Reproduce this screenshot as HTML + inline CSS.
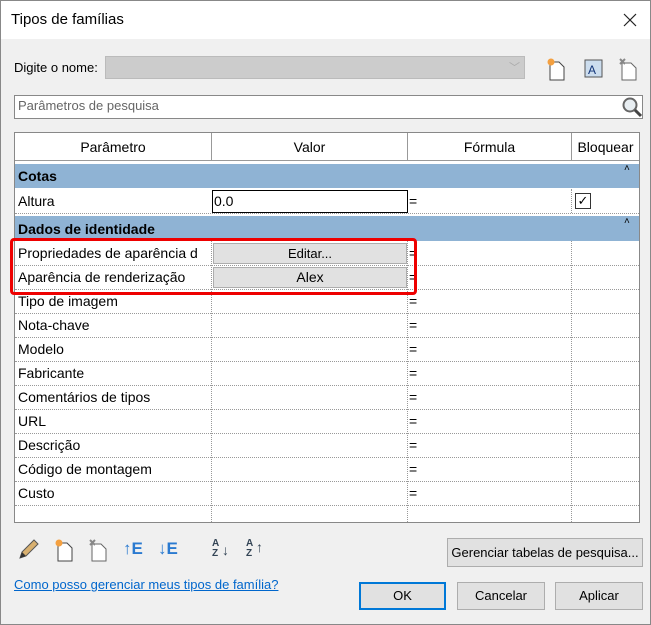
<!DOCTYPE html>
<html><head><meta charset="utf-8"><style>
*{box-sizing:border-box;margin:0;padding:0}
body{width:651px;height:625px;background:#f0f0f0;font-family:"Liberation Sans",sans-serif;font-size:14px;color:#000;position:relative;overflow:hidden;border:1px solid #888}
.a{position:absolute}
.title{left:0;top:0;width:649px;height:38px;background:#fff}
.hl{border-top:1px dotted #999}
.vl{border-left:1px dotted #999}
.cell{position:absolute;height:24px;line-height:24px;white-space:nowrap;overflow:hidden}
.btn{position:absolute;background:#e1e1e1;border:1px solid #adadad;text-align:center;font-size:13px}
</style></head><body>
<div class="a title"></div>
<div class="a" style="left:10px;top:10px;font-size:15px">Tipos de famílias</div>
<svg class="a" style="left:622px;top:12px" width="14" height="14"><path d="M1 1l12 12M13 1L1 13" stroke="#222" stroke-width="1.2"/></svg>

<div class="a" style="left:13px;top:59px;font-size:13px">Digite o nome:</div>
<div class="a" style="left:104px;top:55px;width:420px;height:23px;background:#ccc;border:1px solid #bbb"></div>
<div class="a" style="left:508px;top:58px;color:#aaa;font-size:11px">﹀</div>
<svg class="a" style="left:544px;top:56px" width="22" height="24"><path d="M5 5h9l5 5v13H5z" fill="#fff" stroke="#444"/><circle cx="6" cy="5" r="3.5" fill="#f4a040"/></svg>
<svg class="a" style="left:583px;top:58px" width="20" height="20"><rect x="1" y="1" width="17" height="17" fill="#cde" stroke="#555"/><text x="4" y="15" font-size="12" fill="#137" font-family="Liberation Sans">A</text></svg>
<svg class="a" style="left:616px;top:56px" width="22" height="24"><path d="M5 6h9l5 5v12H5z" fill="#fff" stroke="#666"/><path d="M3 2l5 5M8 2l-5 5" stroke="#888" stroke-width="2"/></svg>

<div class="a" style="left:13px;top:94px;width:629px;height:24px;background:#fff;border:1px solid #888"></div>
<div class="a" style="left:17px;top:97px;color:#666;font-size:13px">Parâmetros de pesquisa</div>
<svg class="a" style="left:620px;top:95px" width="22" height="22"><circle cx="9" cy="9" r="6.5" fill="#e8eef2" stroke="#666" stroke-width="2"/><path d="M14 14l6 6" stroke="#444" stroke-width="3"/></svg>

<div class="a" style="left:13px;top:131px;width:626px;height:391px;background:#fff;border:1px solid #888"></div>
<div class="a" style="left:14px;top:132px;width:624px;height:28px;border-bottom:1px solid #999"></div>
<div class="a" style="left:210px;top:132px;height:28px;border-left:1px solid #999"></div>
<div class="a" style="left:406px;top:132px;height:28px;border-left:1px solid #999"></div>
<div class="a" style="left:570px;top:132px;height:28px;border-left:1px solid #999"></div>
<div class="cell" style="left:14px;top:134px;width:196px;text-align:center">Parâmetro</div>
<div class="cell" style="left:211px;top:134px;width:195px;text-align:center">Valor</div>
<div class="cell" style="left:407px;top:134px;width:163px;text-align:center">Fórmula</div>
<div class="cell" style="left:571px;top:134px;width:67px;text-align:center">Bloquear</div>

<div class="a" style="left:14px;top:163px;width:624px;height:24px;background:#8fb3d4"></div>
<div class="cell" style="left:17px;top:163px;font-weight:bold">Cotas</div>
<div class="a" style="left:623px;top:162px;font-size:10px">˄</div>
<div class="cell" style="left:17px;top:188px">Altura</div>
<div class="a" style="left:211px;top:189px;width:196px;height:23px;border:1px solid #000"></div>
<div class="cell" style="left:213px;top:188px">0.0</div>
<div class="cell" style="left:408px;top:188px">=</div>
<div class="a vl" style="left:570px;top:188px;height:24px"></div>
<div class="a" style="left:574px;top:192px;width:16px;height:16px;border:1px solid #333;font-size:13px;line-height:14px;text-align:center">✓</div>

<div class="a" style="left:14px;top:215px;width:624px;height:25px;background:#8fb3d4"></div>
<div class="cell" style="left:17px;top:216px;font-weight:bold">Dados de identidade</div>
<div class="a" style="left:623px;top:215px;font-size:10px">˄</div>

<div class="a vl" style="left:210px;top:240px;height:281px"></div>
<div class="a vl" style="left:406px;top:240px;height:281px"></div>
<div class="a vl" style="left:570px;top:240px;height:281px"></div>
<div class="a hl" style="left:14px;top:264px;width:624px"></div>
<div class="a hl" style="left:14px;top:288px;width:624px"></div>
<div class="a hl" style="left:14px;top:312px;width:624px"></div>
<div class="a hl" style="left:14px;top:336px;width:624px"></div>
<div class="a hl" style="left:14px;top:360px;width:624px"></div>
<div class="a hl" style="left:14px;top:384px;width:624px"></div>
<div class="a hl" style="left:14px;top:408px;width:624px"></div>
<div class="a hl" style="left:14px;top:432px;width:624px"></div>
<div class="a hl" style="left:14px;top:456px;width:624px"></div>
<div class="a hl" style="left:14px;top:480px;width:624px"></div>
<div class="a hl" style="left:14px;top:504px;width:624px"></div>
<div class="a hl" style="left:14px;top:212px;width:624px"></div>

<div class="cell" style="left:17px;top:240px;width:193px">Propriedades de aparência d</div>
<div class="btn" style="left:212px;top:242px;width:194px;height:21px;line-height:19px">Editar...</div>
<div class="cell" style="left:408px;top:240px">=</div>
<div class="cell" style="left:17px;top:264px">Aparência de renderização</div>
<div class="btn" style="left:212px;top:266px;width:194px;height:21px;line-height:19px;font-size:14px">Alex</div>
<div class="cell" style="left:408px;top:264px">=</div>
<div class="cell" style="left:17px;top:288px">Tipo de imagem</div><div class="cell" style="left:408px;top:288px">=</div>
<div class="cell" style="left:17px;top:312px">Nota-chave</div><div class="cell" style="left:408px;top:312px">=</div>
<div class="cell" style="left:17px;top:336px">Modelo</div><div class="cell" style="left:408px;top:336px">=</div>
<div class="cell" style="left:17px;top:360px">Fabricante</div><div class="cell" style="left:408px;top:360px">=</div>
<div class="cell" style="left:17px;top:384px">Comentários de tipos</div><div class="cell" style="left:408px;top:384px">=</div>
<div class="cell" style="left:17px;top:408px">URL</div><div class="cell" style="left:408px;top:408px">=</div>
<div class="cell" style="left:17px;top:432px">Descrição</div><div class="cell" style="left:408px;top:432px">=</div>
<div class="cell" style="left:17px;top:456px">Código de montagem</div><div class="cell" style="left:408px;top:456px">=</div>
<div class="cell" style="left:17px;top:480px">Custo</div><div class="cell" style="left:408px;top:480px">=</div>

<div class="a" style="left:9px;top:237px;width:407px;height:57px;border:3px solid #e00;border-radius:4px"></div>

<svg class="a" style="left:15px;top:537px" width="24" height="24"><path d="M4 20l2-6 12-12 4 4-12 12z" fill="#d8b070" stroke="#555"/><path d="M4 20l2-6 4 4z" fill="#333"/></svg>
<svg class="a" style="left:52px;top:537px" width="24" height="24"><path d="M5 5h9l5 5v13H5z" fill="#fff" stroke="#444"/><circle cx="6" cy="5" r="3.5" fill="#f4a040"/></svg>
<svg class="a" style="left:86px;top:537px" width="24" height="24"><path d="M5 6h9l5 5v12H5z" fill="#fff" stroke="#666"/><path d="M3 2l5 5M8 2l-5 5" stroke="#888" stroke-width="2"/></svg>
<div class="a" style="left:122px;top:538px;font-size:17px;color:#2a7ad0;font-weight:bold">↑E</div>
<div class="a" style="left:157px;top:538px;font-size:17px;color:#2a7ad0;font-weight:bold">↓E</div>
<div class="a" style="left:211px;top:538px;font-size:10px;line-height:10px;color:#345;font-weight:bold">A<br>Z</div><div class="a" style="left:221px;top:541px;font-size:14px;color:#345">↓</div>
<div class="a" style="left:245px;top:538px;font-size:10px;line-height:10px;color:#345;font-weight:bold">A<br>Z</div><div class="a" style="left:255px;top:538px;font-size:14px;color:#345">↑</div>

<div class="btn" style="left:446px;top:537px;width:196px;height:29px;line-height:27px">Gerenciar tabelas de pesquisa...</div>
<div class="a" style="left:13px;top:576px;font-size:13px;color:#0066cc;text-decoration:underline">Como posso gerenciar meus tipos de família?</div>
<div class="btn" style="left:358px;top:581px;width:87px;height:28px;line-height:24px;border:2px solid #0078d7">OK</div>
<div class="btn" style="left:456px;top:581px;width:88px;height:28px;line-height:26px">Cancelar</div>
<div class="btn" style="left:554px;top:581px;width:88px;height:28px;line-height:26px">Aplicar</div>
</body></html>
